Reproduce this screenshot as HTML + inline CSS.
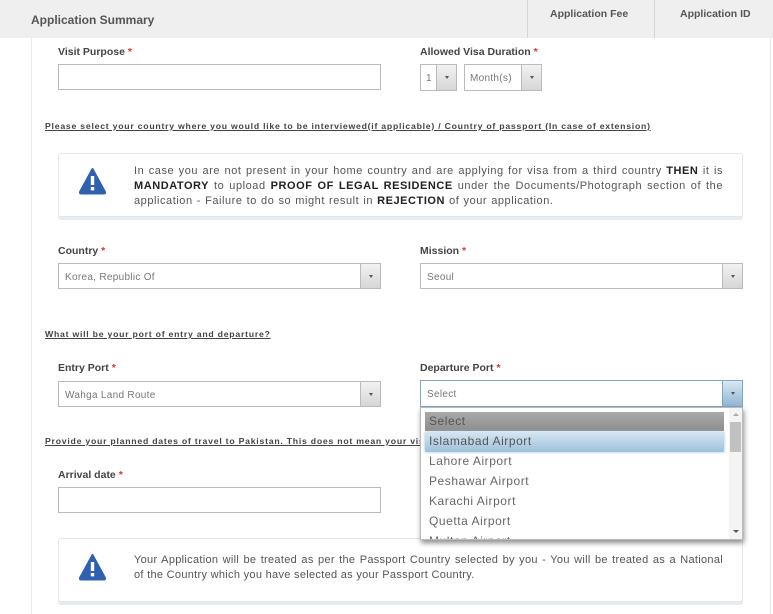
<!DOCTYPE html>
<html><head><meta charset="utf-8"><style>
*{box-sizing:border-box;margin:0;padding:0}
body{width:773px;height:614px;overflow:hidden;background:#fff;font-family:"Liberation Sans",sans-serif;color:#444;position:relative}
.abs{position:absolute}
.hdr{left:0;top:0;width:773px;height:38px;background:#efefef}
.sep{top:0;width:1px;height:38px;background:#d6d6d6}
.lbl{font-size:10.5px;font-weight:bold;color:#444}
.lbl b{color:#d33}
.inp{border:1px solid #bbb;background:#fff;height:26px}
.sel{border:1px solid #bbb;background:#fff;height:26px;font-size:10px;color:#777;padding-left:6px;line-height:27px;letter-spacing:.3px}
.btn{position:absolute;right:0;top:0;width:20px;height:100%;background:linear-gradient(#f2f2f2,#d6d6d6);border-left:1px solid #bbb}
.btn:after{content:"";position:absolute;left:8px;top:11px;border-left:2.5px solid transparent;border-right:2.5px solid transparent;border-top:3px solid #555}
.ul{font-size:8.7px;font-weight:bold;text-decoration:underline;color:#444;letter-spacing:.76px}
.alert{border:1px solid #e3e7ea;border-radius:3px;background:#fff;box-shadow:0 3px 0 #e6edf2}
.atxt{font-size:11px;line-height:15px;color:#555;text-align:justify;letter-spacing:.55px;word-spacing:.5px}
.atxt b{color:#222}
.opt{left:429px;font-size:12px;color:#666;letter-spacing:.55px}
</style></head><body>
<div class="abs hdr"></div>
<div class="abs" style="left:31px;top:13px;font-size:12px;font-weight:bold;color:#555">Application Summary</div>
<div class="abs sep" style="left:527px"></div>
<div class="abs sep" style="left:654px"></div>
<div class="abs" style="left:550px;top:8px;font-size:10.5px;font-weight:bold;color:#555">Application Fee</div>
<div class="abs" style="left:680px;top:8px;font-size:10.5px;font-weight:bold;color:#555">Application ID</div>
<div class="abs" style="left:31px;top:38px;width:1px;height:576px;background:#e4ecf1"></div>
<div class="abs" style="left:770px;top:38px;width:1px;height:576px;background:#e4ecf1"></div>

<div class="abs lbl" style="left:58px;top:46px">Visit Purpose <b>*</b></div>
<div class="abs inp" style="left:58px;top:64px;width:323px"></div>
<div class="abs lbl" style="left:420px;top:46px">Allowed Visa Duration <b>*</b></div>
<div class="abs sel" style="left:420px;top:64px;width:37px;height:27px;padding-left:5px">1<div class="btn"></div></div>
<div class="abs sel" style="left:464px;top:64px;width:78px;height:27px;padding-left:5px">Month(s)<div class="btn"></div></div>

<div class="abs ul" style="left:45px;top:121px;white-space:nowrap">Please select your country where you would like to be interviewed(if applicable) / Country of passport (In case of extension)</div>

<div class="abs alert" style="left:58px;top:153px;width:685px;height:64px"></div>
<svg class="abs" style="left:78px;top:167px" width="29" height="28" viewBox="0 0 29 28"><path d="M14.5 2 L27 25 Q27.5 26.5 26 26.5 L3 26.5 Q1.5 26.5 2 25 Z" fill="#3060b0" stroke="#3060b0" stroke-linejoin="round" stroke-width="2"/><rect x="12.8" y="9" width="3.4" height="9" fill="#fff"/><rect x="12.8" y="20" width="3.4" height="3.4" fill="#fff"/></svg>
<div class="abs atxt" style="left:134px;top:164px;width:589px">In case you are not present in your home country and are applying for visa from a third country <b>THEN</b> it is <b>MANDATORY</b> to upload <b>PROOF OF LEGAL RESIDENCE</b> under the Documents/Photograph section of the application - Failure to do so might result in <b>REJECTION</b> of your application.</div>

<div class="abs lbl" style="left:58px;top:245px">Country <b>*</b></div>
<div class="abs sel" style="left:58px;top:263px;width:323px">Korea, Republic Of<div class="btn"></div></div>
<div class="abs lbl" style="left:420px;top:245px">Mission <b>*</b></div>
<div class="abs sel" style="left:420px;top:263px;width:323px">Seoul<div class="btn"></div></div>

<div class="abs ul" style="left:45px;top:329px">What will be your port of entry and departure?</div>

<div class="abs lbl" style="left:58px;top:362px">Entry Port <b>*</b></div>
<div class="abs sel" style="left:58px;top:381px;width:323px">Wahga Land Route<div class="btn"></div></div>
<div class="abs lbl" style="left:420px;top:362px">Departure Port <b>*</b></div>
<div class="abs sel" style="left:420px;top:380px;width:323px;height:27px;border-color:#7fa7c9">Select<div class="btn" style="background:linear-gradient(#d9e8f3,#8fb6d3);border-left-color:#7fa7c9"></div></div>

<div class="abs ul" style="left:45px;top:436px;width:376px;overflow:hidden;white-space:nowrap">Provide your planned dates of travel to Pakistan. This does not mean your visa will be granted</div>

<div class="abs lbl" style="left:58px;top:469px">Arrival date <b>*</b></div>
<div class="abs inp" style="left:58px;top:487px;width:323px"></div>

<div class="abs alert" style="left:58px;top:538px;width:685px;height:64px"></div>
<svg class="abs" style="left:78px;top:553px" width="29" height="28" viewBox="0 0 29 28"><path d="M14.5 2 L27 25 Q27.5 26.5 26 26.5 L3 26.5 Q1.5 26.5 2 25 Z" fill="#3060b0" stroke="#3060b0" stroke-linejoin="round" stroke-width="2"/><rect x="12.8" y="9" width="3.4" height="9" fill="#fff"/><rect x="12.8" y="20" width="3.4" height="3.4" fill="#fff"/></svg>
<div class="abs atxt" style="left:134px;top:553px;width:589px;letter-spacing:.3px;word-spacing:0">
<div style="text-align:justify;text-align-last:justify;white-space:nowrap">Your Application will be treated as per the Passport Country selected by you - You will be treated as a National</div>
<div>of the Country which you have selected as your Passport Country.</div></div>

<div class="abs" style="left:420px;top:407px;width:323px;height:133px;background:#fff;border:1px solid #bbb;box-shadow:1px 3px 5px rgba(0,0,0,.45);overflow:hidden">
 <div class="abs" style="left:4px;top:4px;width:299px;height:19px;background:linear-gradient(#a9a9a9,#8e8e8e)"></div>
 <div class="abs" style="left:4px;top:24px;width:299px;height:20px;background:linear-gradient(#d5e6f2,#9ec1da);box-shadow:0 0 3px #9ec1da"></div>
 <div class="abs" style="left:308px;top:0;width:14px;height:131px;background:#f4f4f4"></div>
 <div class="abs" style="left:309px;top:14px;width:11px;height:30px;background:#c1c1c1"></div>
 <div class="abs" style="left:312px;top:5px;border-left:3px solid transparent;border-right:3px solid transparent;border-bottom:3px solid #aaa"></div>
 <div class="abs" style="left:312px;top:122px;border-left:3px solid transparent;border-right:3px solid transparent;border-top:3px solid #555"></div>
</div>
<div class="abs opt" style="top:414px;color:#555">Select</div>
<div class="abs opt" style="top:434px;color:#555">Islamabad Airport</div>
<div class="abs opt" style="top:454px">Lahore Airport</div>
<div class="abs opt" style="top:474px">Peshawar Airport</div>
<div class="abs opt" style="top:494px">Karachi Airport</div>
<div class="abs opt" style="top:514px">Quetta Airport</div>
<div class="abs" style="left:421px;top:408px;width:306px;height:131px;overflow:hidden"><div class="abs opt" style="left:8px;top:126px">Multan Airport</div></div>
</body></html>
